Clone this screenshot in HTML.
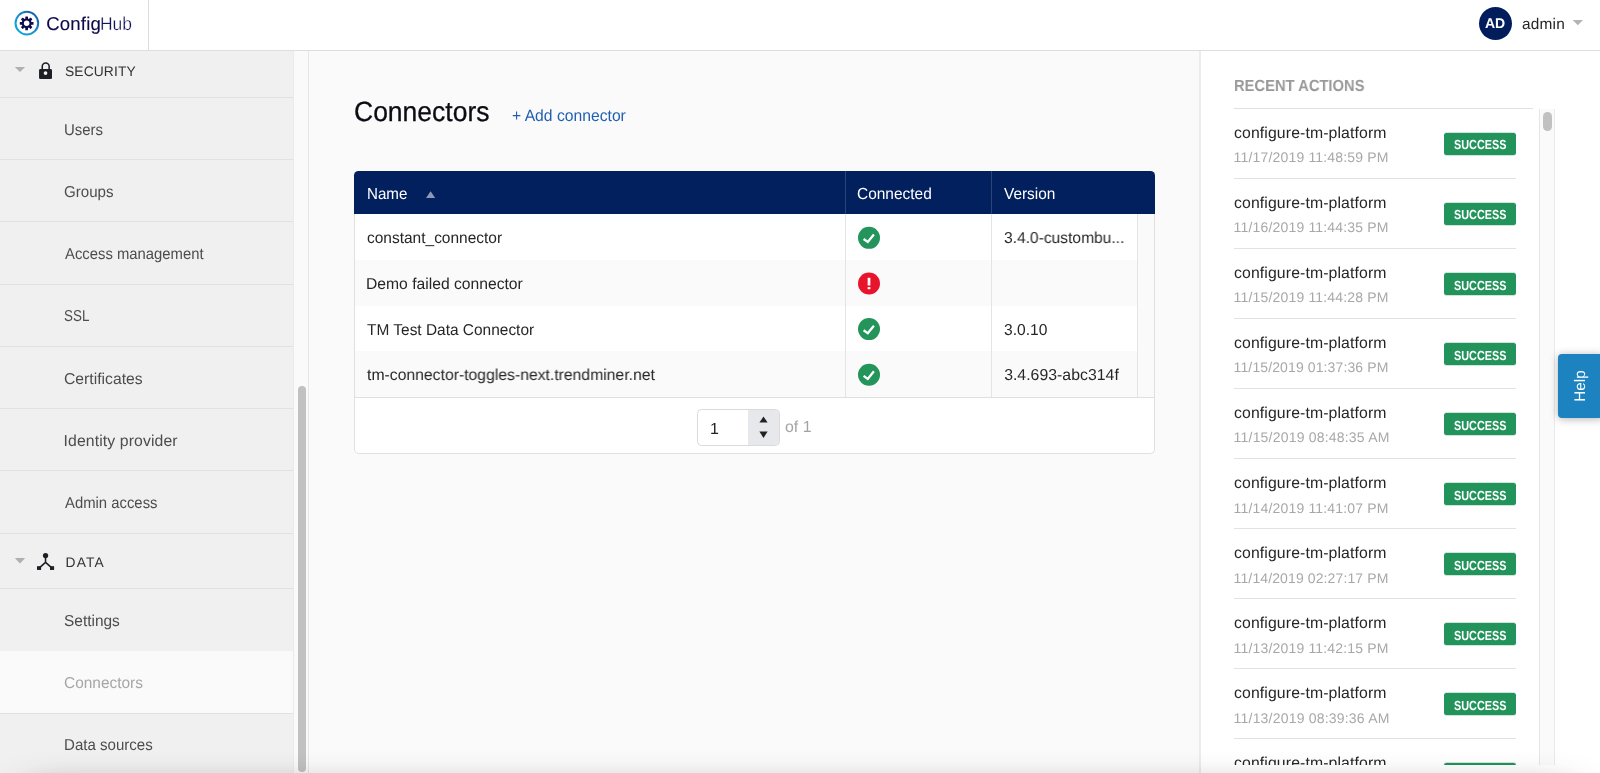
<!DOCTYPE html>
<html lang="en">
<head>
<meta charset="utf-8">
<title>ConfigHub - Connectors</title>
<style>
*{box-sizing:border-box;margin:0;padding:0}
html,body{width:1600px;height:773px;overflow:hidden;background:#fff}
body{font-family:"Liberation Sans",Arial,sans-serif;color:#222;position:relative;font-size:16px}
.a{position:absolute}
.t{position:absolute;white-space:nowrap;line-height:1;transform-origin:0 0;text-rendering:geometricPrecision}
svg{position:absolute;overflow:visible}

#header{position:absolute;left:0;top:0;width:1600px;height:51px;background:#fff;border-bottom:1px solid #dedede;z-index:5}
#logo{position:absolute;left:0;top:0;width:149px;height:50px;border-right:1px solid #dcdcdc}
#avatar{position:absolute;left:1478.9px;top:6.7px;width:33.1px;height:33.1px;border-radius:50%;background:#021d5c}

#side{position:absolute;left:0;top:51px;width:294px;height:722px;background:#f0f0f0;border-right:1px solid #ebebeb}
.sep{position:absolute;left:0;width:293px;height:1px;background:#e1e1e1}
#active{position:absolute;left:0;top:651px;width:293px;height:62px;background:#fafafa}
#strack{position:absolute;left:294px;top:51px;width:14px;height:722px;background:#fafafa}
#sthumb{position:absolute;left:297.5px;top:386px;width:8.5px;height:386px;border-radius:4.2px;background:#c1c1c1}
#sborder{position:absolute;left:308px;top:51px;width:1px;height:722px;background:#e6e6e6}

#main{position:absolute;left:309px;top:51px;width:891px;height:722px;background:#fafafa}

#thead{position:absolute;left:354px;top:171px;width:801px;height:43px;background:#02205e;border-radius:4.5px 4.5px 0 0}
.hdiv{position:absolute;top:171px;width:1px;height:43px;background:rgba(255,255,255,.17)}
#tbody{position:absolute;left:354px;top:214px;width:801px;height:240px;background:#fff;border:1px solid #e0e0e0;border-top:none;border-radius:0 0 5px 5px}
.row{position:absolute;left:355.2px;width:782.4px;height:45.7px}
.vdiv{position:absolute;top:214px;width:1px;height:183px;background:#e4e4e4}
#gutter{position:absolute;left:1138px;top:214px;width:16px;height:183px;background:#fafafa}
#pgline{position:absolute;left:355px;top:397px;width:799px;height:1px;background:#e0e0e0}
#pinput{position:absolute;left:697px;top:409px;width:83px;height:37px;background:#fff;border:1px solid #dadada;border-radius:4.5px;overflow:hidden}
#pspin{position:absolute;left:50px;top:0;width:32px;height:37px;background:#e6e8eb}

#right{position:absolute;left:1199px;top:51px;width:401px;height:722px;background:#fff;border-left:2px solid #ececec}
#rdiv{position:absolute;left:1234px;top:108px;width:299px;height:1px;background:#e0e0e0}
#rlist{position:absolute;left:1201px;top:109px;width:399px;height:655.9px;overflow:hidden;will-change:transform}
.badge{position:absolute;left:243.2px;width:72px;height:22.5px;border-radius:2.5px;background:#22935a;box-shadow:0 -1px 0 rgba(34,147,90,.22),0 1px 0 rgba(34,147,90,.22)}
.asep{position:absolute;left:33px;width:282px;height:1px;background:#e2e2e2}
#rtrack{position:absolute;left:338.3px;top:0;width:16.2px;height:656px;background:#fafafa;border-left:1px solid #e6e6e6;border-right:1px solid #e9e9e9}
#rthumb{position:absolute;left:342.2px;top:3.2px;width:8.8px;height:18.6px;border-radius:4.4px;background:#c1c1c1}

#help{position:absolute;left:1558px;top:353.8px;width:46px;height:64.4px;background:#1d83c0;border-radius:4px;box-shadow:0 1px 8px rgba(0,0,0,.3)}
#helpt{position:absolute;left:1580.7px;top:385.7px;width:0;height:0}
#helpt span{position:absolute;white-space:nowrap;line-height:1;text-rendering:geometricPrecision;font-size:15.3px;color:#fff;transform:translate(-50%,-50%) rotate(-90deg);display:block}

#shadow{position:absolute;left:28px;top:800px;width:1544px;height:60px;border-radius:10px;box-shadow:0 0 40px rgba(0,0,0,.8);z-index:20;pointer-events:none}
</style>
</head>
<body>

<div id="side">
</div>
<div id="active"></div>
<div class="sep" style="top:97px"></div>
<div class="sep" style="top:159px"></div>
<div class="sep" style="top:221px"></div>
<div class="sep" style="top:284px"></div>
<div class="sep" style="top:346px"></div>
<div class="sep" style="top:408px"></div>
<div class="sep" style="top:470px"></div>
<div class="sep" style="top:533px"></div>
<div class="sep" style="top:588px"></div>
<div class="sep" style="top:713px"></div>
<div id="strack"></div>
<div id="sthumb"></div>
<div id="sborder"></div>

<div id="main"></div>

<div id="thead"></div>
<div class="hdiv" style="left:845px"></div>
<div class="hdiv" style="left:991px"></div>
<div id="tbody"></div>
<div class="row" style="top:214.3px;background:#fff"></div>
<div class="row" style="top:260.0px;background:#fafafa"></div>
<div class="row" style="top:305.7px;background:#fff"></div>
<div class="row" style="top:351.4px;background:#fafafa"></div>
<div class="vdiv" style="left:845px"></div>
<div class="vdiv" style="left:991px"></div>
<div class="vdiv" style="left:1137px"></div>
<div id="gutter"></div>
<div id="pgline"></div>
<div id="pinput"><div id="pspin"></div></div>

<div id="right"></div>
<div id="rdiv"></div>
<div id="rlist">
<div class="badge" style="top:23.50px"></div>
<div class="asep" style="top:69px"></div>
<div class="badge" style="top:93.55px"></div>
<div class="asep" style="top:139px"></div>
<div class="badge" style="top:163.60px"></div>
<div class="asep" style="top:209px"></div>
<div class="badge" style="top:233.65px"></div>
<div class="asep" style="top:279px"></div>
<div class="badge" style="top:303.70px"></div>
<div class="asep" style="top:349px"></div>
<div class="badge" style="top:373.75px"></div>
<div class="asep" style="top:419px"></div>
<div class="badge" style="top:443.80px"></div>
<div class="asep" style="top:489px"></div>
<div class="badge" style="top:513.85px"></div>
<div class="asep" style="top:559px"></div>
<div class="badge" style="top:583.90px"></div>
<div class="asep" style="top:629px"></div>
<div class="badge" style="top:653.95px"></div>
<div class="asep" style="top:699px"></div>
<div class="t" style="left:33.01px;top:17.00px;font-size:15.8px;letter-spacing:0.117px;color:#262626;">configure-tm-platform</div>
<div class="t" style="left:32.62px;top:41.00px;font-size:14px;letter-spacing:0.172px;color:#a8a8a8;">11/17/2019 11:48:59 PM</div>
<div class="t" style="left:253.00px;top:29.00px;font-size:13.1px;transform:scaleX(0.8302);color:#fff;font-weight:bold;">SUCCESS</div>
<div class="t" style="left:33.01px;top:87.00px;font-size:15.8px;letter-spacing:0.117px;color:#262626;">configure-tm-platform</div>
<div class="t" style="left:32.62px;top:111.00px;font-size:14px;letter-spacing:0.172px;color:#a8a8a8;">11/16/2019 11:44:35 PM</div>
<div class="t" style="left:253.00px;top:99.00px;font-size:13.1px;transform:scaleX(0.8302);color:#fff;font-weight:bold;">SUCCESS</div>
<div class="t" style="left:33.01px;top:157.00px;font-size:15.8px;letter-spacing:0.117px;color:#262626;">configure-tm-platform</div>
<div class="t" style="left:32.62px;top:181.00px;font-size:14px;letter-spacing:0.172px;color:#a8a8a8;">11/15/2019 11:44:28 PM</div>
<div class="t" style="left:253.00px;top:170.00px;font-size:13.1px;transform:scaleX(0.8302);color:#fff;font-weight:bold;">SUCCESS</div>
<div class="t" style="left:33.01px;top:227.00px;font-size:15.8px;letter-spacing:0.117px;color:#262626;">configure-tm-platform</div>
<div class="t" style="left:32.62px;top:251.00px;font-size:14px;letter-spacing:0.115px;color:#a8a8a8;">11/15/2019 01:37:36 PM</div>
<div class="t" style="left:253.00px;top:240.00px;font-size:13.1px;transform:scaleX(0.8302);color:#fff;font-weight:bold;">SUCCESS</div>
<div class="t" style="left:33.01px;top:297.00px;font-size:15.8px;letter-spacing:0.117px;color:#262626;">configure-tm-platform</div>
<div class="t" style="left:32.62px;top:321.00px;font-size:14px;letter-spacing:0.201px;color:#a8a8a8;">11/15/2019 08:48:35 AM</div>
<div class="t" style="left:253.00px;top:310.00px;font-size:13.1px;transform:scaleX(0.8302);color:#fff;font-weight:bold;">SUCCESS</div>
<div class="t" style="left:33.01px;top:367.00px;font-size:15.8px;letter-spacing:0.117px;color:#262626;">configure-tm-platform</div>
<div class="t" style="left:32.62px;top:392.00px;font-size:14px;letter-spacing:0.172px;color:#a8a8a8;">11/14/2019 11:41:07 PM</div>
<div class="t" style="left:253.00px;top:380.00px;font-size:13.1px;transform:scaleX(0.8302);color:#fff;font-weight:bold;">SUCCESS</div>
<div class="t" style="left:33.01px;top:437.00px;font-size:15.8px;letter-spacing:0.117px;color:#262626;">configure-tm-platform</div>
<div class="t" style="left:32.62px;top:462.00px;font-size:14px;letter-spacing:0.115px;color:#a8a8a8;">11/14/2019 02:27:17 PM</div>
<div class="t" style="left:253.00px;top:450.00px;font-size:13.1px;transform:scaleX(0.8302);color:#fff;font-weight:bold;">SUCCESS</div>
<div class="t" style="left:33.01px;top:507.00px;font-size:15.8px;letter-spacing:0.117px;color:#262626;">configure-tm-platform</div>
<div class="t" style="left:32.62px;top:532.00px;font-size:14px;letter-spacing:0.172px;color:#a8a8a8;">11/13/2019 11:42:15 PM</div>
<div class="t" style="left:253.00px;top:520.00px;font-size:13.1px;transform:scaleX(0.8302);color:#fff;font-weight:bold;">SUCCESS</div>
<div class="t" style="left:33.01px;top:577.00px;font-size:15.8px;letter-spacing:0.117px;color:#262626;">configure-tm-platform</div>
<div class="t" style="left:32.62px;top:602.00px;font-size:14px;letter-spacing:0.201px;color:#a8a8a8;">11/13/2019 08:39:36 AM</div>
<div class="t" style="left:253.00px;top:590.00px;font-size:13.1px;transform:scaleX(0.8302);color:#fff;font-weight:bold;">SUCCESS</div>
<div class="t" style="left:33.01px;top:647.00px;font-size:15.8px;letter-spacing:0.117px;color:#262626;">configure-tm-platform</div>
<div class="t" style="left:253.00px;top:660.00px;font-size:13.1px;transform:scaleX(0.8302);color:#fff;font-weight:bold;">SUCCESS</div>
<div id="rtrack"></div>
<div id="rthumb"></div>
</div>

<div id="header">
  <div id="logo"></div>
  <div id="avatar"></div>
</div>

<svg style="left:0;top:0;z-index:7" width="1600" height="773" viewBox="0 0 1600 773">
<defs><linearGradient id="lg" x1="0.1" y1="0.9" x2="0.9" y2="0.1"><stop offset="0" stop-color="#10a9df"/><stop offset="0.45" stop-color="#1492d0"/><stop offset="1" stop-color="#1a5faa"/></linearGradient></defs>
<circle cx="26.85" cy="23.15" r="11.3" fill="none" stroke="url(#lg)" stroke-width="2"/>
<g transform="translate(26.65,23.3)" fill="#0f0c4d"><circle r="4.9"/><rect x="-1.35" y="-6.85" width="2.7" height="3.8499999999999996" rx="0.5" transform="rotate(0.0)"/><rect x="-1.35" y="-6.85" width="2.7" height="3.8499999999999996" rx="0.5" transform="rotate(45.0)"/><rect x="-1.35" y="-6.85" width="2.7" height="3.8499999999999996" rx="0.5" transform="rotate(90.0)"/><rect x="-1.35" y="-6.85" width="2.7" height="3.8499999999999996" rx="0.5" transform="rotate(135.0)"/><rect x="-1.35" y="-6.85" width="2.7" height="3.8499999999999996" rx="0.5" transform="rotate(180.0)"/><rect x="-1.35" y="-6.85" width="2.7" height="3.8499999999999996" rx="0.5" transform="rotate(225.0)"/><rect x="-1.35" y="-6.85" width="2.7" height="3.8499999999999996" rx="0.5" transform="rotate(270.0)"/><rect x="-1.35" y="-6.85" width="2.7" height="3.8499999999999996" rx="0.5" transform="rotate(315.0)"/><circle r="2.75" fill="#fff"/></g>
<polygon points="1572.7,20 1583,20 1577.85,25.2" fill="#b3b3b3"/>
<polygon points="14.8,66.9 25.1,66.9 19.95,72.1" fill="#b0b0b0"/>
<polygon points="14.8,558.1 25.2,558.1 20,563.6" fill="#b0b0b0"/>
<rect x="39.05" y="69.1" width="12.95" height="9.9" rx="1.3" fill="#1d1f24"/>
<path d="M42.25 69.6 V66.5 a3.45 3.45 0 0 1 6.9 0 V69.6" fill="none" stroke="#1d1f24" stroke-width="1.55"/>
<circle cx="45.55" cy="73.1" r="1.85" fill="#f4f4f4"/>
<circle cx="45.55" cy="555.6" r="2.65" fill="#1d1f24"/>
<path d="M45.55 556 V562.5 M39.05 568.05 L45.55 562.3 L52.05 568.05" fill="none" stroke="#1d1f24" stroke-width="1.55" stroke-linejoin="miter"/>
<rect x="37" y="566.2" width="4.1" height="3.75" fill="#1d1f24"/>
<rect x="50" y="566.2" width="4.1" height="3.75" fill="#1d1f24"/>
<polygon points="426,198.1 435.2,198.1 430.6,191.3" fill="#8d97b6"/>
<polygon points="759.4,422.6 767.6,422.6 763.5,416.5" fill="#222"/>
<polygon points="759.4,431.6 767.6,431.6 763.5,438.1" fill="#222"/>
<g transform="translate(869,237.85)"><circle r="11" fill="#23945a"/><path d="M-5.4 1.2 L-1.2 4.2 L4.9 -3.4" fill="none" stroke="#fff" stroke-width="2.3" stroke-linecap="butt" stroke-linejoin="miter"/></g>
<g transform="translate(869,283.5)"><circle r="11" fill="#e8142b"/><rect x="-1.35" y="-5.7" width="2.7" height="7.7" fill="#fff"/><rect x="-1.35" y="3.6" width="2.7" height="2.1" fill="#fff"/></g>
<g transform="translate(869,329.1)"><circle r="11" fill="#23945a"/><path d="M-5.4 1.2 L-1.2 4.2 L4.9 -3.4" fill="none" stroke="#fff" stroke-width="2.3" stroke-linecap="butt" stroke-linejoin="miter"/></g>
<g transform="translate(869,374.7)"><circle r="11" fill="#23945a"/><path d="M-5.4 1.2 L-1.2 4.2 L4.9 -3.4" fill="none" stroke="#fff" stroke-width="2.3" stroke-linecap="butt" stroke-linejoin="miter"/></g>
</svg>

<div id="help"></div>
<div id="helpt"><span>Help</span></div>

<div style="position:absolute;left:0;top:0;z-index:6;width:0;height:0;will-change:transform">
<div class="t" style="left:46.28px;top:15.00px;font-size:18.6px;letter-spacing:0.151px;color:#0e0b4b;-webkit-text-stroke:0.12px #0e0b4b;">Config</div>
<div class="t" style="left:99.52px;top:15.00px;font-size:18.6px;transform:scaleX(0.9397);color:#10145a;-webkit-text-stroke:0.3px #fff;">Hub</div>
<div class="t" style="left:1484.64px;top:16.00px;font-size:14.1px;transform:scaleX(0.9926);color:#fff;font-weight:bold;">AD</div>
<div class="t" style="left:1521.99px;top:17.00px;font-size:15.4px;letter-spacing:0.204px;color:#262626;">admin</div>
<div class="t" style="left:65.03px;top:65.00px;font-size:13.8px;letter-spacing:0.130px;color:#333;">SECURITY</div>
<div class="t" style="left:63.88px;top:123.00px;font-size:15.8px;transform:scaleX(0.9460);color:#4d4d4d;">Users</div>
<div class="t" style="left:64.34px;top:185.00px;font-size:15.8px;transform:scaleX(0.9565);color:#4d4d4d;">Groups</div>
<div class="t" style="left:64.80px;top:247.00px;font-size:15.8px;transform:scaleX(0.9398);color:#4d4d4d;">Access management</div>
<div class="t" style="left:64.04px;top:309.00px;font-size:15.8px;transform:scaleX(0.8500);color:#4d4d4d;">SSL</div>
<div class="t" style="left:64.31px;top:372.00px;font-size:15.8px;transform:scaleX(0.9948);color:#4d4d4d;">Certificates</div>
<div class="t" style="left:63.60px;top:434.00px;font-size:15.8px;letter-spacing:0.096px;color:#4d4d4d;">Identity provider</div>
<div class="t" style="left:64.80px;top:496.00px;font-size:15.8px;transform:scaleX(0.9407);color:#4d4d4d;">Admin access</div>
<div class="t" style="left:65.48px;top:556.00px;font-size:13.8px;letter-spacing:1.194px;color:#333;">DATA</div>
<div class="t" style="left:63.78px;top:614.00px;font-size:15.8px;transform:scaleX(0.9772);color:#4d4d4d;">Settings</div>
<div class="t" style="left:64.23px;top:676.00px;font-size:15.8px;transform:scaleX(0.9774);color:#a6a6a6;">Connectors</div>
<div class="t" style="left:64.21px;top:738.00px;font-size:15.8px;transform:scaleX(0.9534);color:#4d4d4d;">Data sources</div>
<div class="t" style="left:354.20px;top:98.00px;font-size:27.8px;transform:scaleX(0.9531);color:#0b0b14;-webkit-text-stroke:0.3px #0b0b14;">Connectors</div>
<div class="t" style="left:512.26px;top:108.00px;font-size:16.3px;transform:scaleX(0.9637);color:#1f5fb0;">+ Add connector</div>
<div class="t" style="left:367.22px;top:187.00px;font-size:16px;transform:scaleX(0.9451);color:#fff;">Name</div>
<div class="t" style="left:857.23px;top:187.00px;font-size:16px;transform:scaleX(0.9663);color:#fff;">Connected</div>
<div class="t" style="left:1004.36px;top:187.00px;font-size:16px;transform:scaleX(0.9616);color:#fff;">Version</div>
<div class="t" style="left:366.82px;top:231.00px;font-size:15.8px;transform:scaleX(0.9800);color:#262626;">constant_connector</div>
<div class="t" style="left:366.15px;top:277.00px;font-size:15.8px;transform:scaleX(0.9920);color:#262626;">Demo failed connector</div>
<div class="t" style="left:366.94px;top:323.00px;font-size:15.8px;transform:scaleX(0.9780);color:#262626;">TM Test Data Connector</div>
<div class="t" style="left:367.04px;top:368.00px;font-size:15.8px;transform:scaleX(0.9967);color:#262626;">tm-connector-toggles-next.trendminer.net</div>
<div class="t" style="left:1004.14px;top:231.00px;font-size:15.8px;transform:scaleX(0.9860);color:#262626;">3.4.0-custombu...</div>
<div class="t" style="left:1004.14px;top:323.00px;font-size:15.8px;transform:scaleX(0.9881);color:#262626;">3.0.10</div>
<div class="t" style="left:1004.13px;top:368.00px;font-size:15.8px;letter-spacing:0.033px;color:#262626;">3.4.693-abc314f</div>
<div class="t" style="left:710.11px;top:422.00px;font-size:16px;color:#222;">1</div>
<div class="t" style="left:784.81px;top:420.00px;font-size:16px;transform:scaleX(0.9935);color:#a3a3a3;">of 1</div>
<div class="t" style="left:1233.61px;top:78.00px;font-size:16.1px;transform:scaleX(0.9164);color:#999;font-weight:bold;">RECENT ACTIONS</div>
</div>

<div id="shadow"></div>
</body>
</html>
